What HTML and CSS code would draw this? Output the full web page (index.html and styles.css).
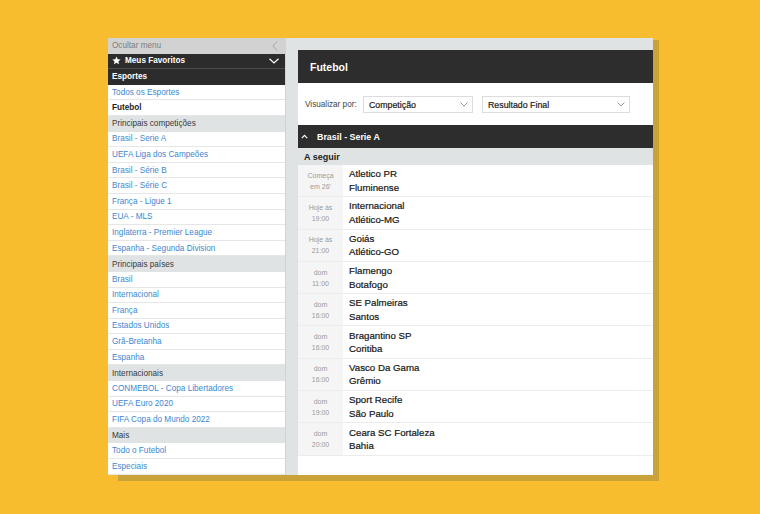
FILE: index.html
```html
<!DOCTYPE html>
<html lang="pt-BR">
<head>
<meta charset="utf-8">
<title>Futebol</title>
<link rel="stylesheet" href="styles.css">
</head>
<body>
<div class="stage">
  <div class="card">
    <aside class="sidebar">
      <div class="row hide-menu">
        <span>Ocultar menu</span>
        <svg class="chev-left" width="6" height="10" viewBox="0 0 6 10"><path d="M5 0.5 L1 5 L5 9.5" fill="none" stroke="#a8a8a8" stroke-width="1"/></svg>
      </div>
      <div class="row dark fav">
        <svg class="star" width="9" height="9" viewBox="0 0 24 24"><path d="M12 1.5l3.2 7.1 7.8.7-5.9 5.2 1.8 7.6L12 18.1l-6.9 4 1.8-7.6L1 9.3l7.8-.7z" fill="#fff"/></svg>
        <span>Meus Favoritos</span>
        <svg class="chev-down" width="10" height="6" viewBox="0 0 10 6"><path d="M0.5 0.8 L5 5 L9.5 0.8" fill="none" stroke="#fff" stroke-width="1.2"/></svg>
      </div>
      <div class="row dark sec">Esportes</div>
      <div class="row link">Todos os Esportes</div>
      <div class="row current">Futebol</div>
      <div class="row group">Principais competições</div>
      <div class="row link">Brasil - Serie A</div>
      <div class="row link">UEFA Liga dos Campeões</div>
      <div class="row link">Brasil - Série B</div>
      <div class="row link">Brasil - Série C</div>
      <div class="row link">França - Ligue 1</div>
      <div class="row link">EUA - MLS</div>
      <div class="row link">Inglaterra - Premier League</div>
      <div class="row link">Espanha - Segunda Division</div>
      <div class="row group">Principais países</div>
      <div class="row link">Brasil</div>
      <div class="row link">Internacional</div>
      <div class="row link">França</div>
      <div class="row link">Estados Unidos</div>
      <div class="row link">Grã-Bretanha</div>
      <div class="row link">Espanha</div>
      <div class="row group">Internacionais</div>
      <div class="row link">CONMEBOL - Copa Libertadores</div>
      <div class="row link">UEFA Euro 2020</div>
      <div class="row link">FIFA Copa do Mundo 2022</div>
      <div class="row group">Mais</div>
      <div class="row link">Todo o Futebol</div>
      <div class="row link">Especiais</div>
    </aside>
    <div class="gutter">
      <main class="panel">
        <header class="panel-head">Futebol</header>
        <div class="filters">
          <span class="filter-label">Visualizar por:</span>
          <div class="select sel-1"><span>Competição</span><svg width="8" height="5" viewBox="0 0 8 5"><path d="M0.5 0.5 L4 4 L7.5 0.5" fill="none" stroke="#999" stroke-width="1"/></svg></div>
          <div class="select sel-2"><span>Resultado Final</span><svg width="8" height="5" viewBox="0 0 8 5"><path d="M0.5 0.5 L4 4 L7.5 0.5" fill="none" stroke="#999" stroke-width="1"/></svg></div>
        </div>
        <div class="comp-bar">
          <svg class="caret" width="7" height="5" viewBox="0 0 7 5"><path d="M0.8 4.2 L3.5 1.3 L6.2 4.2" fill="none" stroke="#fff" stroke-width="1.2"/></svg>
          <span>Brasil - Serie A</span>
        </div>
        <div class="next">A seguir</div>
        <div class="match"><div class="time">Começa<br>em 26'</div><div class="teams"><span>Atletico PR</span><span>Fluminense</span></div></div>
        <div class="match"><div class="time">Hoje às<br>19:00</div><div class="teams"><span>Internacional</span><span>Atlético-MG</span></div></div>
        <div class="match"><div class="time">Hoje às<br>21:00</div><div class="teams"><span>Goiás</span><span>Atlético-GO</span></div></div>
        <div class="match"><div class="time">dom<br>11:00</div><div class="teams"><span>Flamengo</span><span>Botafogo</span></div></div>
        <div class="match"><div class="time">dom<br>16:00</div><div class="teams"><span>SE Palmeiras</span><span>Santos</span></div></div>
        <div class="match"><div class="time">dom<br>16:00</div><div class="teams"><span>Bragantino SP</span><span>Coritiba</span></div></div>
        <div class="match"><div class="time">dom<br>16:00</div><div class="teams"><span>Vasco Da Gama</span><span>Grêmio</span></div></div>
        <div class="match"><div class="time">dom<br>19:00</div><div class="teams"><span>Sport Recife</span><span>São Paulo</span></div></div>
        <div class="match"><div class="time">dom<br>20:00</div><div class="teams"><span>Ceara SC Fortaleza</span><span>Bahia</span></div></div>
      </main>
    </div>
  </div>
</div>
</body>
</html>
```
FILE: styles.css
```css
* { box-sizing: border-box; }
html, body { margin: 0; padding: 0; }
body {
  background: #f7bd2f;
  font-family: "Liberation Sans", Arial, sans-serif;
  width: 760px;
  height: 514px;
  overflow: hidden;
}
.stage {
  padding: 38px 0 0 108px;
}
.card {
  position: relative;
  display: flex;
  width: 545px;
  height: 437px;
  background: #dfe3e3;
}
.card::before {
  content: "";
  position: absolute;
  left: 10px;
  top: 2px;
  right: -6px;
  bottom: -6px;
  background: #c9a23a;
  z-index: -1;
}
.sidebar {
  width: 178px;
  background: #fff;
  border-right: 1px solid #cfd3d3;
  display: flex;
  flex-direction: column;
}
.row {
  height: 15.6px;
  display: flex;
  align-items: center;
  padding-left: 4px;
  font-size: 8.2px;
  white-space: nowrap;
  border-bottom: 1px solid #e6e6e6;
}
.hide-menu {
  background: #d2d2d2;
  color: #7d7d7d;
  justify-content: space-between;
  padding-right: 7px;
  border-bottom: none;
}
.dark {
  background: #2c2c2c;
  color: #fff;
  font-weight: bold;
  border-bottom: 1px solid #4a4a4a;
}
.fav .star { margin-right: 4px; }
.fav .chev-down { margin-left: auto; margin-right: 6px; }
.sec { border-bottom: none; }
.link { color: #3d87d0; }
.current { color: #1e1e1e; font-weight: bold; }
.group {
  background: #dfe3e3;
  color: #3a3a3a;
  border-bottom: none;
}
.gutter {
  flex: 1;
  padding: 12px 0 0 12px;
  display: flex;
}
.panel {
  flex: 1;
  background: #fff;
  display: flex;
  flex-direction: column;
}
.panel-head {
  height: 33px;
  background: #2d2d2d;
  color: #fff;
  font-weight: bold;
  font-size: 10.5px;
  display: flex;
  align-items: center;
  padding-left: 12px;
}
.filters {
  height: 42px;
  display: flex;
  align-items: center;
  padding-left: 7px;
  padding-top: 1px;
}
.filter-label {
  font-size: 8.2px;
  color: #444;
  width: 58px;
}
.select {
  height: 17px;
  border: 1px solid #dcdcdc;
  display: flex;
  align-items: center;
  justify-content: space-between;
  padding: 0 4px 0 5px;
  font-size: 8.8px;
  color: #1a1a1a;
  -webkit-text-stroke: 0.2px #1a1a1a;
}
.sel-1 { width: 110px; margin-right: 9px; }
.sel-2 { width: 148px; }
.comp-bar {
  height: 23px;
  background: #2d2d2d;
  color: #fff;
  font-weight: bold;
  font-size: 8.9px;
  display: flex;
  align-items: center;
  padding-left: 3px;
}
.comp-bar .caret { margin-right: 9px; }
.next {
  height: 17px;
  background: #e0e3e3;
  color: #222;
  font-weight: bold;
  font-size: 9px;
  display: flex;
  align-items: center;
  padding-left: 6px;
}
.match {
  height: 32.3px;
  display: flex;
  border-bottom: 1px solid #ececec;
}
.time {
  width: 45px;
  background: #f5f5f5;
  color: #9a9a9a;
  font-size: 7px;
  line-height: 11px;
  text-align: center;
  display: flex;
  align-items: center;
  justify-content: center;
}
.teams {
  display: flex;
  flex-direction: column;
  justify-content: center;
  padding-left: 6px;
  font-size: 9.7px;
  color: #151515;
  -webkit-text-stroke: 0.2px #151515;
  line-height: 13.5px;
}
```
